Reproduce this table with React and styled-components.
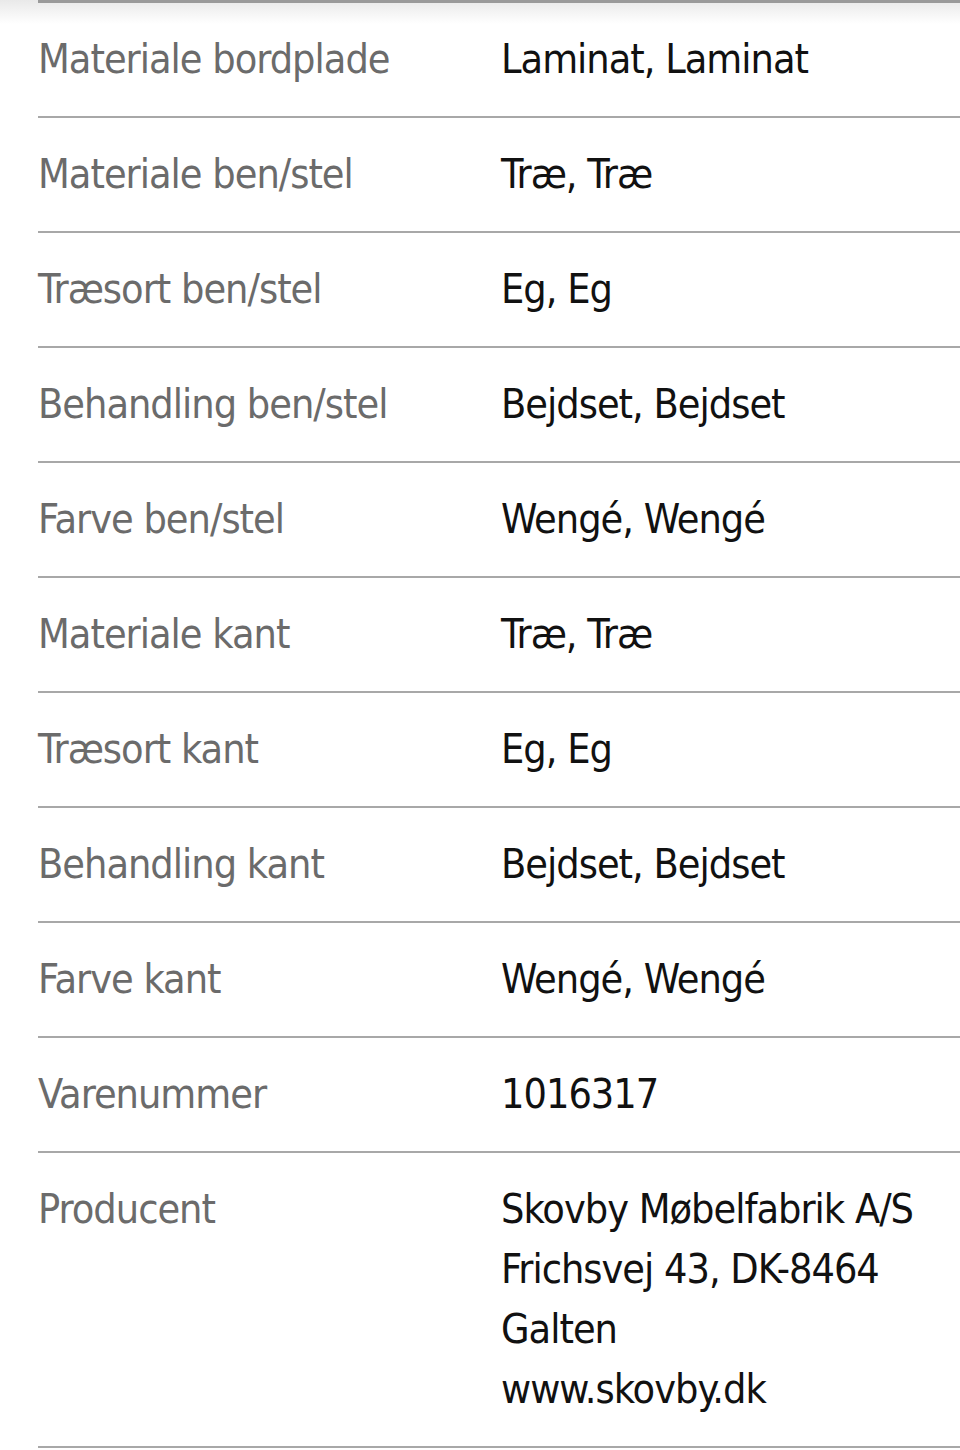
import React from "react";
import styled, { createGlobalStyle } from "styled-components";

const GlobalStyle = createGlobalStyle`
  html, body {
    margin: 0;
    padding: 0;
    background: #fff;
  }
`;

const Page = styled.div`
  background: linear-gradient(#e9e9e9 0, #ffffff 24px);
  font-family: "DejaVu Sans Condensed", "Liberation Sans Narrow", "Liberation Sans", sans-serif;
  font-size: 41px;
  letter-spacing: -1px;
  line-height: 60px;
  min-height: 1450px;
  overflow: hidden;
`;

const SpecList = styled.dl`
  border-top: 3px solid #9a9a9a;
  margin: 0 0 0 38px;
  padding: 0;
`;

const Row = styled.div`
  border-bottom: 2px solid #a8a8a8;
  display: grid;
  grid-template-columns: 463px 1fr;
  padding: 26px 0 27px;
`;

const Label = styled.dt`
  color: #6b6b6b;
  margin: 0;
`;

const Value = styled.dd`
  color: #111;
  margin: 0;
  white-space: nowrap;
`;

const specs = [
  ["Materiale bordplade", ["Laminat, Laminat"]],
  ["Materiale ben/stel", ["Træ, Træ"]],
  ["Træsort ben/stel", ["Eg, Eg"]],
  ["Behandling ben/stel", ["Bejdset, Bejdset"]],
  ["Farve ben/stel", ["Wengé, Wengé"]],
  ["Materiale kant", ["Træ, Træ"]],
  ["Træsort kant", ["Eg, Eg"]],
  ["Behandling kant", ["Bejdset, Bejdset"]],
  ["Farve kant", ["Wengé, Wengé"]],
  ["Varenummer", ["1016317"]],
  [
    "Producent",
    ["Skovby Møbelfabrik A/S", "Frichsvej 43, DK-8464", "Galten", "www.skovby.dk"],
  ],
];

const App = () => (
  <Page>
    <GlobalStyle />
    <SpecList>
      {specs.map(([label, lines]) => (
        <Row key={label}>
          <Label>{label}</Label>
          <Value>
            {lines.map((line) => (
              <div key={line}>{line}</div>
            ))}
          </Value>
        </Row>
      ))}
    </SpecList>
  </Page>
);

export default App;
